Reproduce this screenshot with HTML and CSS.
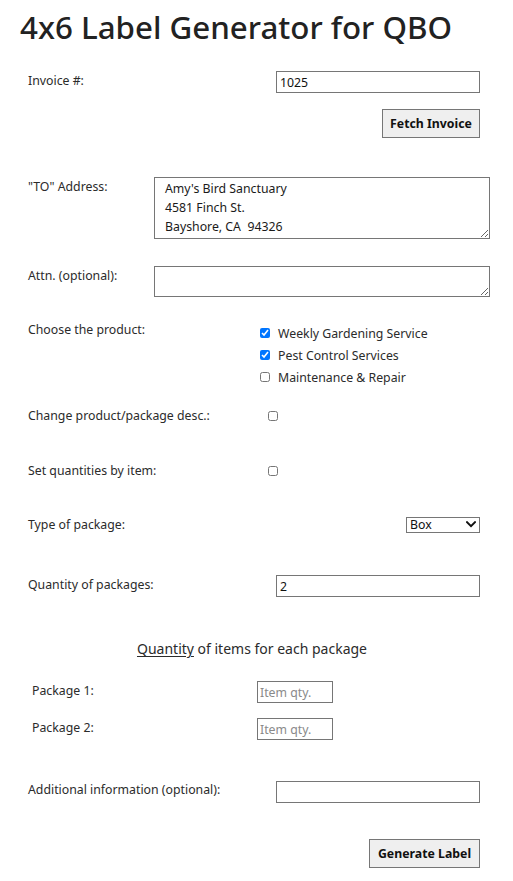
FILE: index.html
```html
<!DOCTYPE html>
<html lang="en">
<head>
<meta charset="utf-8">
<title>4x6 Label Generator for QBO</title>
<link rel="stylesheet" href="styles.css">
</head>
<body>
<h1 class="title">4x6 Label Generator for QBO</h1>
<form class="form">
  <div class="row row-invoice">
    <label class="lbl">Invoice #:</label>
    <input class="field field-wide" type="text" value="1025">
  </div>
  <div class="row row-fetch">
    <button type="button" class="btn btn-fetch">Fetch Invoice</button>
  </div>
  <div class="row row-to">
    <label class="lbl lbl-ta">"TO" Address:</label>
    <textarea class="area area-to">Amy's Bird Sanctuary
4581 Finch St.
Bayshore, CA  94326</textarea>
  </div>
  <div class="row row-attn">
    <label class="lbl lbl-ta">Attn. (optional):</label>
    <textarea class="area area-attn"></textarea>
  </div>
  <div class="row row-choose">
    <label class="lbl lbl-choose">Choose the product:</label>
    <div class="checklist">
      <label class="check"><input type="checkbox" class="cb" checked><span>Weekly Gardening Service</span></label>
      <label class="check"><input type="checkbox" class="cb" checked><span>Pest Control Services</span></label>
      <label class="check"><input type="checkbox" class="cb"><span>Maintenance &amp; Repair</span></label>
    </div>
  </div>
  <div class="row row-single row-desc">
    <label class="lbl lbl-single">Change product/package desc.:</label>
    <input type="checkbox" class="cb cb-single">
  </div>
  <div class="row row-single row-setqty">
    <label class="lbl lbl-single">Set quantities by item:</label>
    <input type="checkbox" class="cb cb-single">
  </div>
  <div class="row row-type">
    <label class="lbl lbl-type">Type of package:</label>
    <div class="sel-wrap">
      <select class="sel"><option>Box</option><option>Envelope</option><option>Pallet</option></select>
      <svg class="sel-arrow" width="10" height="7" viewBox="0 0 10 7" aria-hidden="true"><polyline points="1,1.2 5,5.2 9,1.2" fill="none" stroke="#111" stroke-width="2" stroke-linecap="square"/></svg>
    </div>
  </div>
  <div class="row row-qty">
    <label class="lbl">Quantity of packages:</label>
    <input class="field field-wide" type="text" value="2">
  </div>
  <p class="subhead"><u>Quantity</u> of items for each package</p>
  <div class="row row-pkg row-pkg1">
    <label class="lbl lbl-pkg">Package 1:</label>
    <input class="field field-small" type="text" placeholder="Item qty.">
  </div>
  <div class="row row-pkg row-pkg2">
    <label class="lbl lbl-pkg">Package 2:</label>
    <input class="field field-small" type="text" placeholder="Item qty.">
  </div>
  <div class="row row-add">
    <label class="lbl">Additional information (optional):</label>
    <input class="field field-wide" type="text">
  </div>
  <div class="row row-gen">
    <button type="button" class="btn btn-gen">Generate Label</button>
  </div>
</form>
</body>
</html>
```
FILE: styles.css
```css
html, body {
  margin: 0;
  padding: 0;
  background: #fff;
}
body {
  font-family: "Noto Sans", "Open Sans", sans-serif;
  color: #2b2b2b;
  font-size: 12.3px;
}
.title {
  margin: 0;
  padding: 8px 0 0 20px;
  font-size: 31.3px;
  line-height: 38px;
  font-weight: 500;
  color: #222;
  letter-spacing: 0;
}
.form {
  display: flex;
  flex-direction: column;
  padding: 0 33px 0 28px;
}
.row {
  display: flex;
  align-items: flex-start;
}
.lbl {
  flex: 0 0 auto;
  line-height: 16px;
}
.field {
  box-sizing: border-box;
  height: 22px;
  border: 1px solid #767676;
  border-radius: 0;
  padding: 1px 3px;
  font-family: inherit;
  font-size: 12.3px;
  color: #111;
  background: #fff;
  outline: none;
}
.field::placeholder {
  color: #8a8a8a;
}
.field-wide {
  width: 204px;
  margin-left: auto;
}
.field-small {
  width: 76px;
  margin-left: auto;
  margin-right: 147px;
  padding: 1px 2px;
}
.row-invoice { margin-top: 25px; }
.row-invoice .lbl { padding-top: 2px; }
.row-fetch { margin-top: 16px; justify-content: flex-end; }
.btn {
  box-sizing: border-box;
  height: 29px;
  border: 1px solid #767676;
  border-radius: 0;
  background: #efefef;
  color: #111;
  font-family: inherit;
  font-size: 12.3px;
  font-weight: 700;
  padding: 0;
  white-space: nowrap;
}
.btn-fetch { width: 98px; }
.btn-gen { width: 111px; }
.row-to { margin-top: 39px; }
.lbl-ta { width: 126px; padding-top: 2px; }
.area {
  box-sizing: border-box;
  width: 336px;
  margin-right: -10px;
  border: 1px solid #767676;
  border-radius: 0;
  font-family: inherit;
  font-size: 12.3px;
  line-height: 19px;
  color: #1a1a1a;
  padding: 1px 10px;
  outline: none;
}
.area-to { height: 62px; }
.area-attn { height: 31px; }
.row-attn { margin-top: 27px; }
.row-choose { margin-top: 25px; }
.lbl-choose { width: 232px; padding-top: 0; }
.checklist {
  display: flex;
  flex-direction: column;
}
.check {
  display: flex;
  align-items: center;
  height: 22px;
}
.cb {
  width: 10px;
  height: 10px;
  margin: 0 8px 0 0;
  accent-color: #0075ff;
}
.row-single { align-items: center; }
.lbl-single { width: 240px; }
.cb-single { margin: 0; }
.row-desc { margin-top: 20px; }
.row-setqty { margin-top: 39px; }
.row-type { margin-top: 38px; align-items: center; }
.sel-wrap {
  position: relative;
  margin-left: auto;
  width: 74px;
  height: 16px;
}
.sel {
  display: block;
  -webkit-appearance: none;
  appearance: none;
  width: 74px;
  height: 16px;
  box-sizing: border-box;
  border: 1px solid #767676;
  border-radius: 0;
  font-family: inherit;
  font-size: 12.3px;
  line-height: 14px;
  padding: 0 14px 0 3px;
  background: #fff;
  color: #111;
  outline: none;
}
.sel-arrow {
  position: absolute;
  right: 4px;
  top: 4px;
  pointer-events: none;
}
.row-qty { margin-top: 42px; }
.row-qty .lbl { padding-top: 2px; }
.subhead {
  margin: 42px 0 0;
  text-align: center;
  font-size: 14px;
  line-height: 20px;
  padding-right: 4px;
}
.subhead u { text-underline-offset: 2px; }
.row-pkg1 { margin-top: 22px; }
.row-pkg2 { margin-top: 15px; }
.lbl-pkg { padding: 2px 0 0 4px; }
.row-add { margin-top: 41px; }
.row-add .lbl { padding-top: 1px; }
.row-gen { margin-top: 36px; justify-content: flex-end; }
```
